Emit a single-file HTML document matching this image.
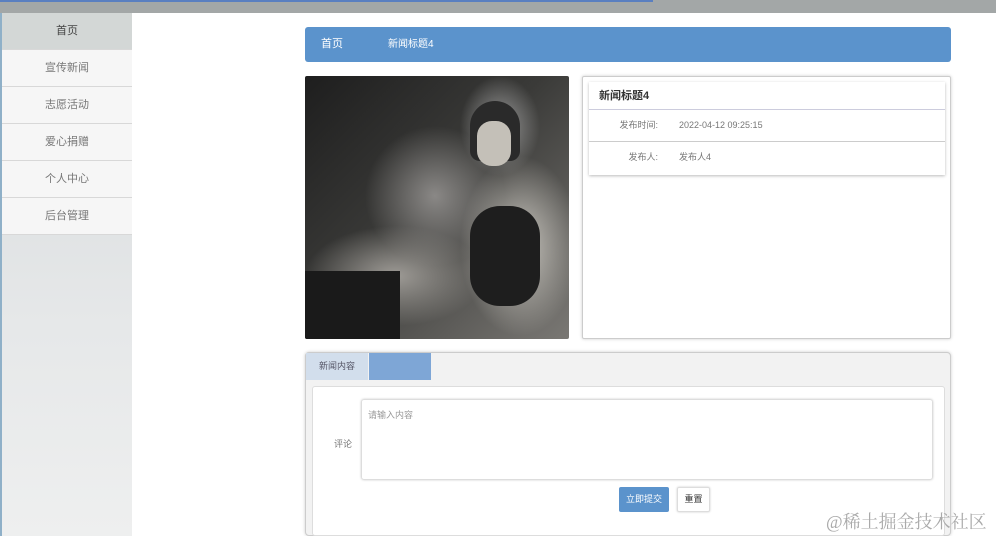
<!DOCTYPE html>
<html><head><meta charset="utf-8"><style>
*{margin:0;padding:0;box-sizing:border-box}
body{width:996px;height:536px;overflow:hidden;background:#fff;font-family:"Liberation Sans","Noto Sans CJK SC",sans-serif;position:relative;color:#555}
.topbar{position:absolute;left:0;top:0;width:996px;height:13px;background:#a3a7a7}
.topline{position:absolute;left:0;top:0;width:653px;height:2px;background:#5a7fc0}
.side{position:absolute;left:0;top:13px;width:132px;height:523px;background:linear-gradient(#d5d9db,#e6e8e9 60%,#eeefef);border-left:2px solid #8fb0c8}
.side div{height:37px;line-height:36px;text-align:center;font-size:11px;color:#777;background:#f6f6f6;border-bottom:1px solid #d8d8d8;width:130px}
.side div.act{background:#d3d7d6;color:#444}
.crumb{position:absolute;left:305px;top:27px;width:646px;height:35px;background:#5b93cc;border-radius:3px;color:#fff;font-size:11px;line-height:35px}
.photo{position:absolute;left:305px;top:76px;width:264px;height:263px;background:
radial-gradient(ellipse 40px 50px at 195px 50px,#9a9a9a,transparent),
radial-gradient(ellipse 60px 90px at 215px 170px,#c8c5be,transparent),
radial-gradient(ellipse 90px 50px at 90px 200px,#9e9b96,transparent),
radial-gradient(ellipse 70px 70px at 130px 120px,#8a8886,transparent),
linear-gradient(135deg,#1e1e1e,#3a3a38 45%,#7a7874);border-radius:2px;overflow:hidden}
.info{position:absolute;left:582px;top:76px;width:369px;height:263px;border:1px solid #ccc;box-shadow:0 0 3px #ccc;border-radius:2px}
.card{position:absolute;left:6px;top:5px;width:356px;height:93px;box-shadow:0 1px 3px #bbb;background:#fff}
.card .t{height:28px;line-height:28px;padding-left:10px;font-size:11px;font-weight:bold;color:#333;border-bottom:1px solid #ccd}
.card .r{height:32px;line-height:31px;font-size:9px;color:#777;border-bottom:1px solid #ccc;position:relative}
.card .r span{position:absolute;right:287px}
.card .r b{font-weight:normal;position:absolute;left:90px}
.tabs{position:absolute;left:305px;top:352px;width:646px;height:184px;border:1px solid #ccc;border-radius:4px;background:#f2f2f2;box-shadow:0 0 3px #ccc}
.tab1{position:absolute;left:0;top:0;width:62px;height:27px;background:#d2deec;font-size:9px;line-height:27px;text-align:center;color:#556}
.tab2{position:absolute;left:63px;top:0;width:62px;height:27px;background:#7ea6d6}
.inner{position:absolute;left:6px;top:33px;width:633px;height:150px;background:#fff;border:1px solid #ddd;border-radius:3px}
.lbl{position:absolute;left:21px;top:50px;font-size:9px;color:#777}
.ta{position:absolute;left:48px;top:12px;width:572px;height:81px;border:1px solid #ddd;border-radius:3px;box-shadow:0 0 2px #ccc;font-size:9px;color:#999;padding:8px 6px}
.b1{position:absolute;left:306px;top:100px;width:50px;height:25px;background:#5b93cc;color:#fff;font-size:9px;line-height:25px;text-align:center;border-radius:2px}
.b2{position:absolute;left:364px;top:100px;width:33px;height:25px;background:#fff;border:1px solid #ddd;box-shadow:0 0 2px #ccc;color:#333;font-size:9px;line-height:23px;text-align:center;border-radius:2px}
.wm{position:absolute;left:826px;top:508px;font-size:18px;color:#aaa;font-family:"Liberation Serif","Noto Serif CJK SC",serif}
</style></head><body>
<div class="topbar"></div><div class="topline"></div>
<div class="side">
<div class="act">首页</div><div>宣传新闻</div><div>志愿活动</div><div>爱心捐赠</div><div>个人中心</div><div>后台管理</div>
</div>
<div class="crumb"><span style="position:absolute;left:16px">首页</span><span style="position:absolute;left:83px;font-size:10px">新闻标题4</span></div>
<div class="photo">
<div style="position:absolute;left:0;top:195px;width:95px;height:68px;background:#1a1a1a"></div>
<div style="position:absolute;left:165px;top:130px;width:70px;height:100px;background:#1e1e1e;border-radius:30px"></div>
<div style="position:absolute;left:165px;top:25px;width:50px;height:60px;background:#2a2a2a;border-radius:25px 25px 10px 10px"></div>
<div style="position:absolute;left:172px;top:45px;width:34px;height:45px;background:#c4c0b8;border-radius:15px"></div>
</div>
<div class="info"><div class="card">
<div class="t">新闻标题4</div>
<div class="r"><span>发布时间:</span><b>2022-04-12 09:25:15</b></div>
<div class="r" style="border-bottom:none"><span>发布人:</span><b>发布人4</b></div>
</div></div>
<div class="tabs">
<div class="tab1">新闻内容</div><div class="tab2"></div>
<div class="inner">
<div class="lbl">评论</div>
<div class="ta">请输入内容</div>
<div class="b1">立即提交</div><div class="b2">重置</div>
</div></div>
<div class="wm">@稀土掘金技术社区</div>
</body></html>
